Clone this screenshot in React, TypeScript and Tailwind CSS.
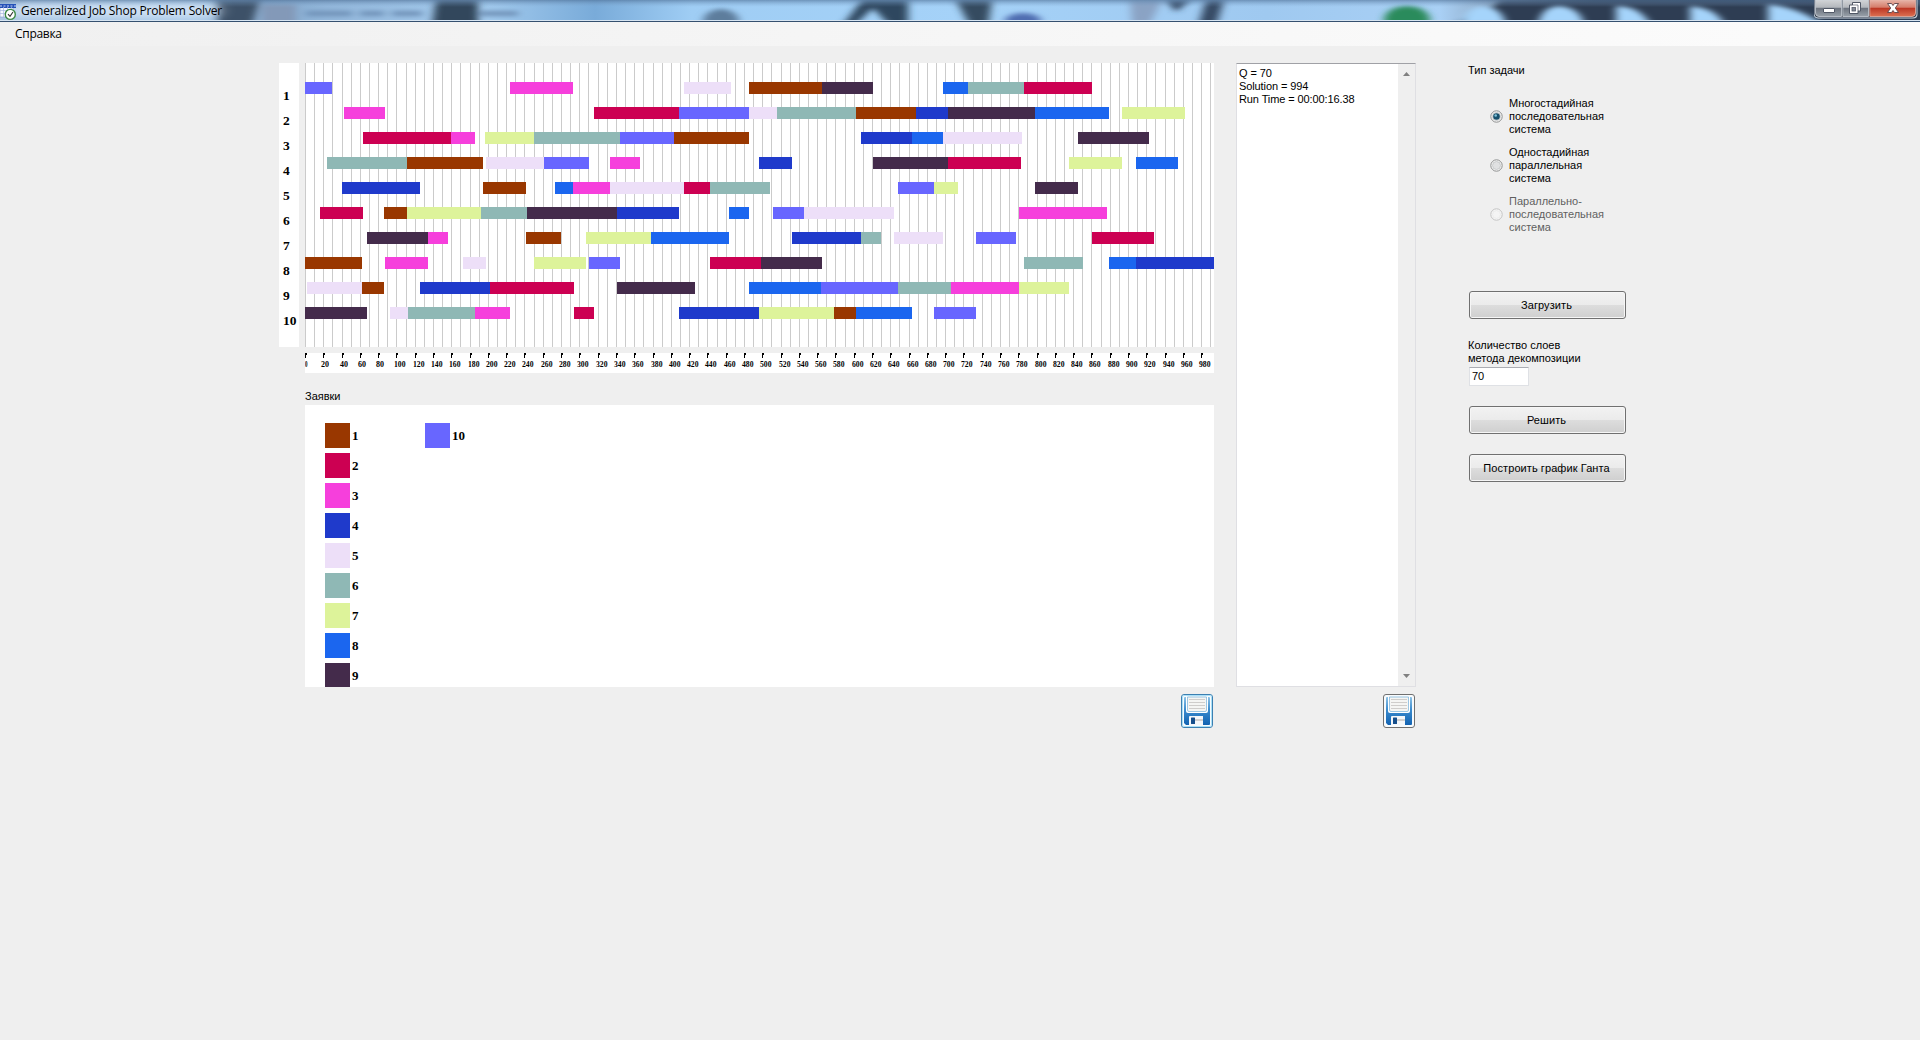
const COLORS = ['#993700', '#cc0052', '#f63fdc', '#1f3acb', '#eddff8', '#8fb8b5', '#ddf39a', '#1b66ef', '#442b4b', '#6866ff'];

// Each bar: [start, end, job]
const ROWS: [number, number, number][][] = [
  [[0, 27, 10], [205, 268, 3], [379, 426, 5], [444, 517, 1], [517, 568, 9], [638, 663, 8], [663, 719, 6], [719, 787, 2]],
  [[39, 80, 3], [289, 374, 2], [374, 444, 10], [444, 472, 5], [472, 551, 6], [551, 611, 1], [611, 643, 4], [643, 730, 9], [730, 804, 8], [817, 880, 7]],
  [[58, 146, 2], [146, 170, 3], [180, 229, 7], [229, 315, 6], [315, 369, 10], [369, 444, 1], [556, 607, 4], [607, 638, 8], [638, 717, 5], [773, 844, 9]],
  [[22, 102, 6], [102, 178, 1], [181, 239, 5], [239, 284, 10], [305, 335, 3], [454, 487, 4], [568, 643, 9], [643, 716, 2], [764, 817, 7], [831, 873, 8]],
  [[37, 115, 4], [178, 221, 1], [250, 268, 8], [268, 305, 3], [305, 379, 5], [379, 405, 2], [405, 465, 6], [593, 629, 10], [629, 653, 7], [730, 773, 9]],
  [[15, 58, 2], [79, 102, 1], [102, 176, 7], [176, 222, 6], [222, 312, 9], [312, 374, 4], [424, 444, 8], [468, 499, 10], [499, 589, 5], [714, 802, 3]],
  [[62, 123, 9], [123, 143, 3], [221, 256, 1], [281, 346, 7], [346, 424, 8], [487, 556, 4], [556, 576, 6], [589, 638, 5], [671, 711, 10], [787, 849, 2]],
  [[0, 57, 1], [80, 123, 3], [158, 181, 5], [229, 281, 7], [284, 315, 10], [405, 456, 2], [456, 517, 9], [719, 778, 6], [804, 831, 8], [831, 909, 4]],
  [[2, 57, 5], [57, 79, 1], [115, 185, 4], [185, 269, 2], [312, 390, 9], [444, 516, 8], [516, 593, 10], [593, 646, 6], [646, 714, 3], [714, 764, 7]],
  [[0, 62, 9], [85, 103, 5], [103, 170, 6], [170, 205, 3], [269, 289, 2], [374, 454, 4], [454, 529, 7], [529, 551, 1], [551, 607, 8], [629, 671, 10]],
];

const SCALE = 909 / 994;

function GridLines() {
  return (
    <svg className="absolute inset-0" width="909" height="284" shapeRendering="crispEdges">
      {Array.from({ length: 100 }, (_, i) => (
        <rect key={i} x={Math.round(i * 10 * SCALE)} y="0" width="1" height="284" fill="#cbcbcb" />
      ))}
    </svg>
  );
}

function Gantt() {
  return (
    <div className="relative h-[284px] w-[909px] overflow-hidden bg-white">
      <GridLines />
      <div className="relative flex flex-col gap-[13px] pt-[19px]">
        {ROWS.map((row, r) => (
          <div key={r} className="flex h-3">
            {row.map(([s, e, job], i) => (
              <div
                key={i}
                className="h-3 shrink-0"
                style={{ marginLeft: s - (i ? row[i - 1][1] : 0), width: e - s, backgroundColor: COLORS[job - 1] }}
              />
            ))}
          </div>
        ))}
      </div>
    </div>
  );
}

function Axis() {
  return (
    <svg className="mt-1.5 block" width="909" height="20">
      <rect width="909" height="20" fill="#fff" />
      {Array.from({ length: 50 }, (_, i) => {
        const x = Math.round(i * 20 * SCALE);
        return (
          <g key={i}>
            <rect x={x} y="0" width="1" height="5" fill="#000" shapeRendering="crispEdges" />
            <rect x={x} y="0" width="2" height="2" fill="#000" shapeRendering="crispEdges" />
            <text
              x={i === 0 ? 0 : x - 2}
              y="14"
              fontFamily="Liberation Serif, Times New Roman, serif"
              fontWeight="700"
              fontSize="7.6"
              textLength={i === 0 ? 2.5 : i < 5 ? 8 : 11.5}
              lengthAdjust="spacingAndGlyphs"
            >
              {i * 20}
            </text>
          </g>
        );
      })}
    </svg>
  );
}

function LegendItem({ job }: { job: number }) {
  return (
    <div className="flex h-[25px] shrink-0 items-center gap-[2px]">
      <div className="size-[25px] shrink-0" style={{ backgroundColor: COLORS[job - 1] }} />
      <span className="font-['Liberation_Serif',serif] text-[13px] font-bold leading-none">{job}</span>
    </div>
  );
}

function FloppyButton({ focused }: { focused?: boolean }) {
  return (
    <button className="block h-[34px] w-8">
      <svg width="32" height="34" viewBox="0 0 32 34">
        <defs>
          <linearGradient id="disk" x1="0" y1="0" x2="0" y2="1">
            <stop offset="0" stopColor="#8fc3e6" />
            <stop offset="0.45" stopColor="#3a8bce" />
            <stop offset="1" stopColor="#1263b2" />
          </linearGradient>
        </defs>
        <rect x="0.5" y="0.5" width="31" height="33" rx="2.5" fill="#f8fbfd" stroke={focused ? '#3c7fb1' : '#707070'} />
        {focused && <rect x="1.5" y="1.5" width="29" height="31" rx="1.5" fill="none" stroke="#a9e0f8" />}
        <path d="M4 3H28Q29 3 29 4V30Q29 31 28 31H5L3 29V4Q3 3 4 3Z" fill="url(#disk)" />
        <path d="M5 3H27V17Q27 19 25 19H7Q5 19 5 17Z" fill="#fff" />
        <path d="M6.5 3H25.5V16Q25.5 17.5 24 17.5H8Q6.5 17.5 6.5 16Z" fill="#f5f5f3" stroke="#5da2d3" strokeWidth="0.6" />
        <path d="M8 5.5H24M8 8.5H24M8 11.5H24M8 14.5H24" stroke="#cfcdcb" strokeWidth="1" />
        <path d="M8 31V23Q8 22 9 22H22V31Z" fill="#f4f7fa" />
        <path d="M14 25H22V27H14Z" fill="#d2d0cf" />
        <rect x="10" y="23.5" width="4" height="6.5" rx="0.5" fill="#164f8c" />
      </svg>
    </button>
  );
}

function PushButton({ children }: { children: string }) {
  return (
    <button className="flex h-7 w-[157px] items-center justify-center rounded-[3px] border border-[#707070] bg-[linear-gradient(to_bottom,#f2f2f2_0%,#ebebeb_50%,#dddddd_50%,#cfcfcf_100%)] pr-[2px] text-[11px] tracking-[0.08px] shadow-[inset_0_0_0_1px_#f6f6f6]">
      {children}
    </button>
  );
}

function Radio({ lines, checked, disabled }: { lines: string[]; checked?: boolean; disabled?: boolean }) {
  return (
    <div className={disabled ? 'flex items-center gap-[6px] text-[#5f5f5f]' : 'flex items-center gap-[6px] text-black'}>
      <svg width="13" height="13" viewBox="0 0 13 13">
        <circle cx="6.5" cy="6.5" r="5.7" fill="#f8f8f8" stroke={disabled ? '#c2c2c2' : '#8e8f8f'} />
        <circle cx="6.5" cy="6.5" r="4" fill={disabled ? '#f4f4f4' : '#e0e1e2'} stroke={disabled ? '#e6e6e6' : '#bcbfc0'} strokeWidth="0.7" />
        {checked && <circle cx="6.5" cy="6.5" r="3.3" fill="#17506c" />}
        {checked && <circle cx="5.7" cy="5.5" r="1.3" fill="#7fc4dc" />}
      </svg>
      <div className="leading-[13px]">
        {lines.map((l) => (
          <div key={l}>{l}</div>
        ))}
      </div>
    </div>
  );
}

function TitleBackdrop() {
  return (
    <svg className="absolute inset-0" width="1920" height="20" aria-hidden="true">
      <defs>
        <linearGradient id="sky" x1="0" x2="1" y1="0" y2="0">
          <stop offset="0" stopColor="#a9c5e3" />
          <stop offset="0.1" stopColor="#abcbe9" />
          <stop offset="0.14" stopColor="#84a9cd" />
          <stop offset="0.17" stopColor="#92b6da" />
          <stop offset="0.25" stopColor="#a4cbee" />
          <stop offset="0.31" stopColor="#79abd9" />
          <stop offset="0.36" stopColor="#9fcdf4" />
          <stop offset="0.5" stopColor="#a5d2f8" />
          <stop offset="0.66" stopColor="#9fc9f0" />
          <stop offset="0.75" stopColor="#a9d0f5" />
          <stop offset="0.79" stopColor="#8094ab" />
          <stop offset="0.83" stopColor="#3b4a5e" />
          <stop offset="1" stopColor="#2d3c50" />
        </linearGradient>
        <linearGradient id="shade" x1="0" x2="0" y1="0" y2="1">
          <stop offset="0" stopColor="#4b6c92" stopOpacity="0.6" />
          <stop offset="0.35" stopColor="#7fa5cc" stopOpacity="0" />
        </linearGradient>
        <filter id="soft" x="-20%" y="-50%" width="140%" height="200%">
          <feGaussianBlur stdDeviation="4 2" />
        </filter>
        <filter id="glow" x="-20%" y="-100%" width="140%" height="300%">
          <feGaussianBlur stdDeviation="8 3" />
        </filter>
      </defs>
      <rect width="1920" height="20" fill="url(#sky)" />
      <g filter="url(#soft)">
        <path d="M216 0H260L252 26H218Z" fill="#3e5168" />
        <path d="M436 0H478V26H432Z" fill="#33465c" />
        <path d="M262 4H296V24H262Z" fill="#8399b8" />
        <path d="M306 11H352V16H306ZM360 11H384V16H360ZM392 11H422V16H392ZM480 11H518V16H480Z" fill="#6f92b8" />
        <ellipse cx="721" cy="22" rx="18" ry="13" fill="#5d7d9c" />
        <path d="M862 0H908V26H890L873 8L854 26H842Z" fill="#2e465e" />
        <path d="M956 0H992L988 26H970Z" fill="#354b61" />
        <ellipse cx="1023" cy="21" rx="18" ry="8" fill="#506db1" />
        <path d="M1130 0H1162L1150 24H1132Z" fill="#8aa3c4" />
        <path d="M1166 0H1190L1176 12ZM1206 0H1224L1216 26H1198Z" fill="#344a64" />
        <path d="M1500 0H1920V26H1445Q1480 20 1500 0Z" fill="#2f3e52" />
        <ellipse cx="1407" cy="20" rx="23" ry="14" fill="#2a8b5c" />
      </g>
      <g filter="url(#soft)">
        <path d="M1462 24Q1466 6 1484 6Q1502 8 1506 24ZM1538 24Q1542 6 1560 6Q1580 8 1584 24ZM1616 24V6Q1640 6 1650 24ZM1690 24V6Q1716 8 1724 24ZM1768 24V4Q1800 8 1822 24Z" fill="#a5d4fb" />
      </g>
      <rect width="1920" height="20" fill="url(#shade)" />
      <rect x="10" y="4" width="210" height="13" rx="6" fill="#e4eefa" opacity="0.6" filter="url(#glow)" />
    </svg>
  );
}

function WindowButtons() {
  return (
    <svg className="relative block" width="104" height="19" viewBox="0 0 104 19">
      <defs>
        <linearGradient id="grayBtn" x1="0" y1="0" x2="0" y2="1">
          <stop offset="0" stopColor="#d2d4d6" />
          <stop offset="0.45" stopColor="#b3b7bc" />
          <stop offset="0.47" stopColor="#6a717c" />
          <stop offset="1" stopColor="#98a0a9" />
        </linearGradient>
        <linearGradient id="redBtn" x1="0" y1="0" x2="0" y2="1">
          <stop offset="0" stopColor="#e6b4a8" />
          <stop offset="0.45" stopColor="#d57b69" />
          <stop offset="0.47" stopColor="#bb3321" />
          <stop offset="1" stopColor="#dc7052" />
        </linearGradient>
      </defs>
      <path d="M-0.5 0V14Q0 18.5 4 18.5H99Q103.5 18.5 103.5 14V0Z" fill="#c8d3de" />
      <path d="M0.5 0V13.5Q0.5 17.5 4.5 17.5H98.5Q102.5 17.5 102.5 13.5V0Z" fill="#2a3342" />
      <path d="M1.5 0H27.5V16.5H5Q1.5 16.5 1.5 13Z" fill="url(#grayBtn)" stroke="#ccd2d9" strokeWidth="0.8" />
      <path d="M28.8 0H54.5V16.5H28.8Z" fill="url(#grayBtn)" stroke="#ccd2d9" strokeWidth="0.8" />
      <path d="M55.8 0H101.5V13Q101.5 16.5 98 16.5H55.8Z" fill="url(#redBtn)" stroke="#e9b6aa" strokeWidth="0.8" />
      <rect x="9.5" y="8.5" width="11" height="4" rx="0.5" fill="#fff" stroke="#515866" />
      <path d="M38.5 2.5H46.5V11H44V13.5H35.5V5H38.5Z" fill="#fff" stroke="#515866" />
      <rect x="38" y="7.5" width="3.5" height="3.5" fill="#858c97" stroke="#515866" strokeWidth="0.8" />
      <path d="M38.5 5H44V11" fill="none" stroke="#515866" strokeWidth="0.7" />
      <path d="M73.5 3.5H77.5L79 5.5L80.5 3.5H84.5L81.3 8L84.5 12.5H80.5L79 10.5L77.5 12.5H73.5L76.7 8Z" fill="#fff" stroke="#5c4348" strokeWidth="0.9" />
    </svg>
  );
}

export default function App() {
  return (
    <div className="h-[1040px] w-[1920px] overflow-hidden bg-[#efefef] font-['Liberation_Sans',Arial,sans-serif] text-[11px] text-black">
      <header className="relative flex h-[22px] justify-between border-b border-[#35506f] bg-[#d7e5f2]">
        <TitleBackdrop />
        <div className="relative flex items-center gap-[5px]">
          <svg width="16" height="20" viewBox="0 0 16 20">
            <rect x="0" y="4" width="13" height="12" fill="#f5f8ff" stroke="#8798c8" strokeWidth="0.6" />
            <rect x="0" y="3" width="16" height="4" fill="#2451b8" />
            <path d="M0 5H16" stroke="#c8d4f2" strokeWidth="1" strokeDasharray="2 1.5" />
            <path d="M3.5 6V16M7.5 6V16M11.5 6V12M0 9.5H14M0 12.5H10" stroke="#a9b8e0" strokeWidth="0.7" />
            <circle cx="10.3" cy="13.4" r="5" fill="#fff" stroke="#3d8b46" strokeWidth="1.4" />
            <path d="M8 13.2L10 15.4L13 11" fill="none" stroke="#333" strokeWidth="1.1" />
          </svg>
          <span className="font-['Open_Sans',sans-serif] text-[12px] tracking-[-0.19px]">Generalized Job Shop Problem Solver</span>
        </div>
        <div className="mr-[2px]">
          <WindowButtons />
        </div>
      </header>
      <nav className="flex h-[24px] items-center bg-linear-to-r from-[#f0f0f0] to-[#fcfcfc] pl-[15px] font-['Open_Sans',sans-serif] text-[12px] tracking-[-0.3px]">
        Справка
      </nav>

      <main className="flex pl-[279px] pt-[17px]">
        <div className="flex h-[284px] w-5 flex-col bg-white pt-[20px] font-['Liberation_Serif',serif] text-[13.5px] font-bold">
          {ROWS.map((_, i) => (
            <div key={i} className="h-[25px] pl-[4px] leading-[25px]">
              {i + 1}
            </div>
          ))}
        </div>

        <section className="ml-1.5 w-[909px]">
          <Gantt />
          <Axis />
          <div className="mt-[16px] h-4 leading-[14px]">Заявки</div>
          <div className="flex h-[282px] gap-[75px] overflow-hidden bg-white pl-5 pt-[18px]">
            <div className="flex w-[25px] flex-col gap-[5px]">
              {[1, 2, 3, 4, 5, 6, 7, 8, 9].map((j) => (
                <LegendItem key={j} job={j} />
              ))}
            </div>
            <LegendItem job={10} />
          </div>
          <div className="mt-[7px] flex justify-end pr-px">
            <FloppyButton focused />
          </div>
        </section>

        <section className="ml-[22px] flex w-[180px] flex-col items-end">
          <div className="flex h-[624px] w-[180px] justify-between border border-[#dfdfe3] border-t-[#a0a1a6] bg-white">
            <div className="pl-[2px] pt-[3px] leading-[13px] tracking-[-0.1px]">
              <div>Q = 70</div>
              <div>Solution = 994</div>
              <div>Run Time = 00:00:16.38</div>
            </div>
            <div className="flex w-[17px] flex-col items-center justify-between bg-[#efefef] py-2">
              <svg width="7" height="4"><path d="M0 4L3.5 0L7 4Z" fill="#808080" /></svg>
              <svg width="7" height="4"><path d="M0 0L3.5 4L7 0Z" fill="#808080" /></svg>
            </div>
          </div>
          <div className="mr-px mt-[7px]">
            <FloppyButton />
          </div>
        </section>

        <aside className="ml-[52px] flex w-[160px] flex-col">
          <div className="leading-[14px]">Тип задачи</div>
          <div className="ml-[22px] mt-[20px] flex flex-col gap-[10px]">
            <Radio checked lines={['Многостадийная', 'последовательная', 'система']} />
            <Radio lines={['Одностадийная', 'параллельная', 'система']} />
            <Radio disabled lines={['Параллельно-', 'последовательная', 'система']} />
          </div>
          <div className="ml-px mt-[57px]"><PushButton>Загрузить</PushButton></div>
          <div className="mt-[20px] leading-[13px]">
            <div>Количество слоев</div>
            <div>метода декомпозиции</div>
          </div>
          <div className="ml-px mt-[2px] h-[19px] w-[60px] border border-[#dfe1e5] border-t-[#abadb3] bg-white pl-[2px] leading-[17px]">70</div>
          <div className="ml-px mt-[20px]"><PushButton>Решить</PushButton></div>
          <div className="ml-px mt-[20px]"><PushButton>Построить график Ганта</PushButton></div>
        </aside>
      </main>
    </div>
  );
}
